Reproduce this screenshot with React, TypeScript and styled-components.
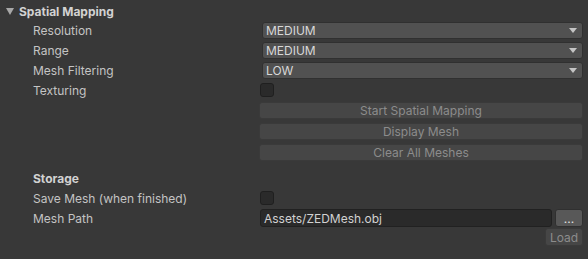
import styled, { createGlobalStyle } from "styled-components";

const GlobalStyle = createGlobalStyle`
  html, body {
    margin: 0;
    padding: 0;
    background: #383838;
  }
  body {
    font-family: Inter, "Noto Sans", "Liberation Sans", sans-serif;
    font-size: 12px;
    color: #c4c4c4;
  }
`;

const Inspector = styled.div`
  width: 588px;
  height: 259px;
  display: flex;
  flex-direction: column;
  padding-top: 2px;
  box-sizing: border-box;
  overflow: hidden;
`;

const Foldout = styled.div`
  height: 18px;
  display: flex;
  align-items: center;
  padding-left: 6px;
  gap: 5px;
  font-weight: 700;
  color: #d2d2d2;
`;

const Triangle = styled.span`
  width: 0;
  height: 0;
  border-left: 4px solid transparent;
  border-right: 4px solid transparent;
  border-top: 7px solid #a8a8a8;
`;

const Row = styled.div<{ $h?: number }>`
  height: ${(p) => p.$h ?? 20}px;
  display: grid;
  grid-template-columns: 227px 1fr;
  align-items: center;
  padding-left: 33px;
  padding-right: 5px;
`;

const Label = styled.span<{ $bold?: boolean }>`
  font-weight: ${(p) => (p.$bold ? 700 : 400)};
  color: ${(p) => (p.$bold ? "#d2d2d2" : "#c4c4c4")};
  white-space: nowrap;
`;

const Popup = styled.div`
  height: 17px;
  margin-left: 2px;
  display: flex;
  align-items: center;
  justify-content: space-between;
  padding: 0 5px 0 3px;
  background: #515151;
  border: 1px solid #303030;
  border-radius: 3px;
  box-sizing: border-box;
  color: #d8d8d8;
`;

const Arrow = styled.span`
  width: 0;
  height: 0;
  border-left: 4px solid transparent;
  border-right: 4px solid transparent;
  border-top: 5px solid #c4c4c4;
`;

const Checkbox = styled.div`
  width: 14px;
  height: 14px;
  background: #2a2a2a;
  border: 1px solid #1f1f1f;
  border-radius: 3px;
  box-sizing: border-box;
`;

const ButtonColumn = styled.div`
  display: flex;
  flex-direction: column;
  gap: 4px;
  padding: 2px 5px 0 259px;
`;

const Button = styled.div<{ $enabled?: boolean }>`
  height: 17px;
  display: flex;
  align-items: center;
  justify-content: center;
  background: ${(p) => (p.$enabled ? "#585858" : "#464646")};
  border: 1px solid ${(p) => (p.$enabled ? "#303030" : "#3a3a3a")};
  border-radius: 3px;
  box-sizing: border-box;
  color: ${(p) => (p.$enabled ? "#e4e4e4" : "#8c8c8c")};
  white-space: nowrap;
`;

const PathRow = styled.div`
  display: flex;
  gap: 3px;
  align-items: center;
`;

const TextField = styled.div`
  flex: 1;
  height: 18px;
  display: flex;
  align-items: center;
  padding-left: 3px;
  background: #2a2a2a;
  border: 1px solid #212121;
  border-radius: 3px;
  box-sizing: border-box;
  color: #d2d2d2;
`;

const SmallButton = styled(Button)<{ $w: number }>`
  width: ${(p) => p.$w}px;
  height: 18px;
`;

const LoadRow = styled.div`
  display: flex;
  justify-content: flex-end;
  padding: 0 5px 0 0;
`;

const Spacer = styled.div<{ $h: number }>`
  height: ${(p) => p.$h}px;
`;

const dropdowns = [
  { label: "Resolution", value: "MEDIUM" },
  { label: "Range", value: "MEDIUM" },
  { label: "Mesh Filtering", value: "LOW" },
];

export default function App() {
  return (
    <>
      <GlobalStyle />
      <Inspector>
        <Foldout>
          <Triangle />
          Spatial Mapping
        </Foldout>
        {dropdowns.map((d) => (
          <Row key={d.label}>
            <Label>{d.label}</Label>
            <Popup>
              {d.value}
              <Arrow />
            </Popup>
          </Row>
        ))}
        <Row>
          <Label>Texturing</Label>
          <Checkbox />
        </Row>
        <ButtonColumn>
          <Button>Start Spatial Mapping</Button>
          <Button>Display Mesh</Button>
          <Button>Clear All Meshes</Button>
        </ButtonColumn>
        <Spacer $h={7} />
        <Row>
          <Label $bold>Storage</Label>
        </Row>
        <Row>
          <Label>Save Mesh (when finished)</Label>
          <Checkbox />
        </Row>
        <Row>
          <Label>Mesh Path</Label>
          <PathRow>
            <TextField>Assets/ZEDMesh.obj</TextField>
            <SmallButton $enabled $w={28}>...</SmallButton>
          </PathRow>
        </Row>
        <LoadRow>
          <SmallButton $w={38}>Load</SmallButton>
        </LoadRow>
      </Inspector>
    </>
  );
}
